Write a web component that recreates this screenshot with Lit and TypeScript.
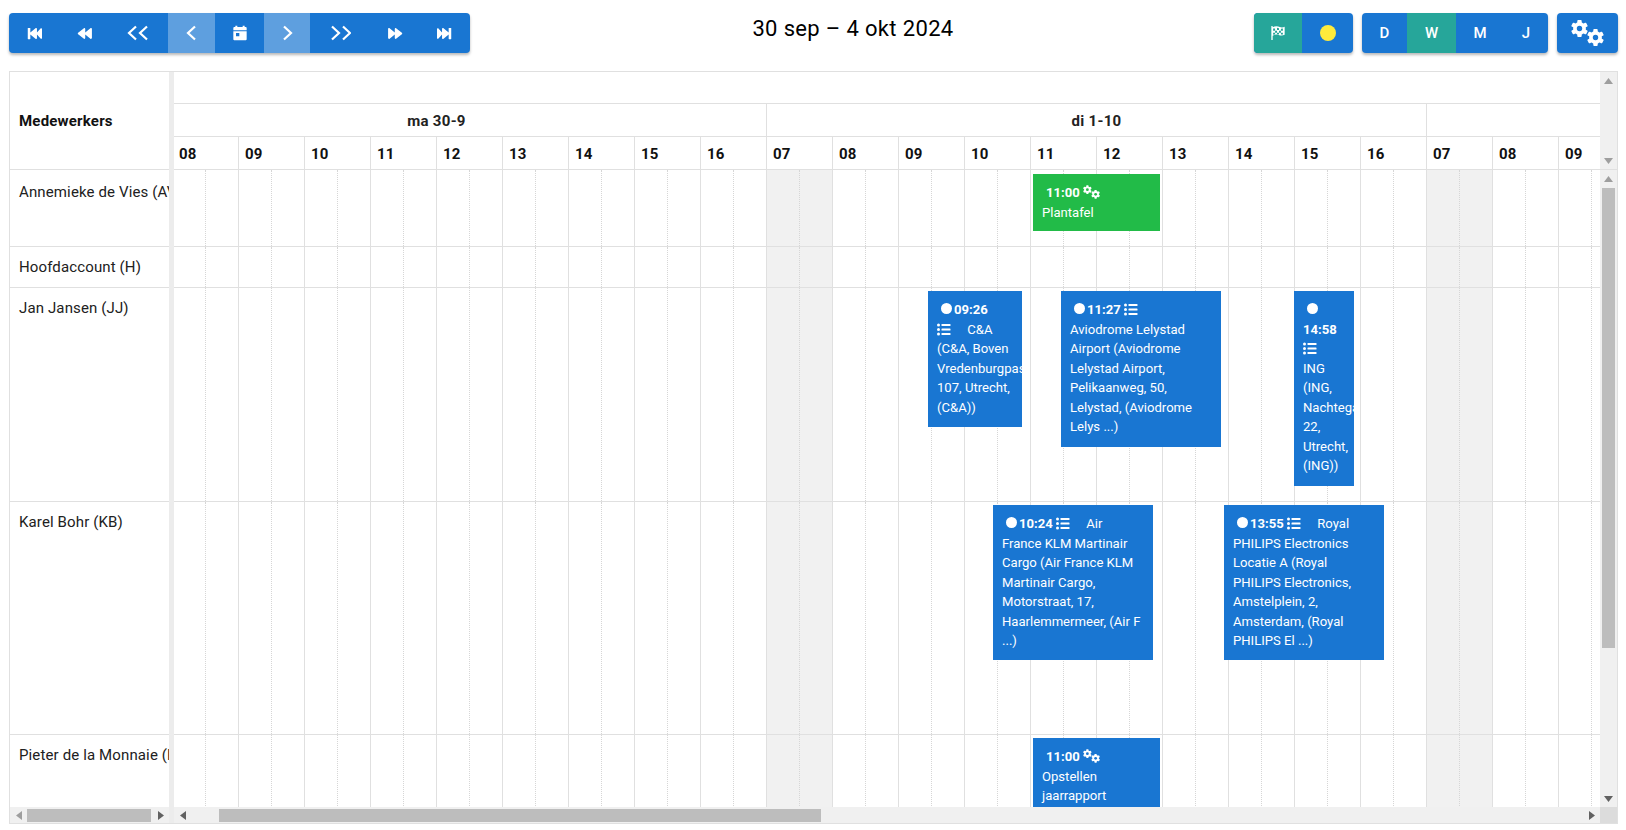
import { LitElement, html, css, svg } from "lit";
import { customElement } from "lit/decorators.js";

const ic = (body: unknown, w: number, h: number, vb = "0 0 512 512") =>
  html`<svg width=${w} height=${h} viewBox=${vb} fill="currentColor">${body}</svg>`;

const skipBack = svg`<path d="M40 64h60c8 0 14 6 14 14v140L300 70c16-12 40-2 40 20v136L470 80c14-14 42-6 42 18v316c0 24-28 32-42 18L340 286v136c0 22-24 32-40 20L114 294v140c0 8-6 14-14 14H40c-8 0-14-6-14-14V78c0-8 6-14 14-14z"/>`;
const back = svg`<path d="M10 256c0-10 5-18 12-24L220 78c18-14 44-2 44 22v124L440 78c18-14 52-2 52 22v312c0 24-34 36-52 22L264 288v124c0 24-26 36-44 22L22 280c-7-6-12-14-12-24z"/>`;
const fwd = svg`<path d="M502 256c0-10-5-18-12-24L292 78c-18-14-44-2-44 22v124L72 78c-18-14-52-2-52 22v312c0 24 34 36 52 22l176-146v124c0 24 26 36 44 22l198-154c7-6 12-14 12-24z"/>`;
const skipFwd = svg`<path d="M472 64h-60c-8 0-14 6-14 14v140L212 70c-16-12-40-2-40 20v136L42 80c-14-14-42-6-42 18v316c0 24 28 32 42 18l130-146v136c0 22 24 32 40 20l186-148v140c0 8 6 14 14 14h60c8 0 14-6 14-14V78c0-8-6-14-14-14z"/>`;
const calendar = svg`<path d="M5 3V1h3v2h8V1h3v2h1.500A1.500 1.500 0 0 1 22 4.500V8H2V4.500A1.500 1.500 0 0 1 3.500 3H5z"/><path fill-rule="evenodd" d="M2 9.500h20V21.500A1.500 1.500 0 0 1 20.500 23h-17A1.500 1.500 0 0 1 2 21.500V9.500zM6 12v5h5v-5H6z"/>`;
const gear = (cx: number, cy: number) => {
  const teeth = [0, 60, 120].map(
    (a) => svg`<rect x=${cx - 2.2} y=${cy - 8.5} width="4.400" height="17" rx=".9" transform="rotate(${a} ${cx} ${cy})"/>`
  );
  const R = 6.4, r = 2.7;
  return svg`<g>${teeth}</g><path fill-rule="evenodd" d="M${cx - R} ${cy}a${R} ${R} 0 1 0 ${2 * R} 0a${R} ${R} 0 1 0 ${-2 * R} 0z"/><circle cx=${cx} cy=${cy} r=${r} fill="var(--gear-hole)"/>`;
};
const gears = svg`${gear(8.5, 8.5)}${gear(24.5, 17.5)}`;
const flag = svg`<path fill-rule="evenodd" d="M1 1h1.500v1.600C5 1.200 8 1.200 10.500 2.200c2 .8 3.600.6 5.500-.2v9c-2.200 1-4 1.200-6 .4-2.700-1-5-.8-7.500.6V17H1V1zm2 3v2.400h2.200V4H3zm4.400-.8v2.400h2.200V3.600L7.400 3.200zm4.400 1v2.400H14V3.900l-2.200.3zM5.200 6.400v2.300h2.200V6.400H5.200zm4.400 0v2.400h2.200V6.500H9.600zM3 8.700V11l2.200-.6V8.700H3zm4.400 0v1.800l2.200.3V8.800H7.400zm4.400.1v2h2.200V8.700l-2.200.1z"/>`;
const list = svg`<circle cx="1.500" cy="2" r="1.500"/><circle cx="1.500" cy="6.500" r="1.500"/><circle cx="1.500" cy="11" r="1.500"/><rect x="4.500" y="1" width="9" height="2" rx=".6"/><rect x="4.500" y="5.500" width="9" height="2" rx=".6"/><rect x="4.500" y="10" width="9" height="2" rx=".6"/>`;

const chevL = (x = 0) => svg`<path d="M${x + 9} 1.500 L${x + 2} 8 L${x + 9} 14.500" fill="none" stroke="currentColor" stroke-width="2.200"/>`;
const chevR = (x = 0) => svg`<path d="M${x + 2} 1.500 L${x + 9} 8 L${x + 2} 14.500" fill="none" stroke="currentColor" stroke-width="2.200"/>`;

const navButtons = [
  { w: 50, tone: "", icon: ic(skipBack, 17, 15) },
  { w: 51, tone: "", icon: ic(back, 16, 15) },
  { w: 58, tone: "", icon: ic(svg`${chevL(0)}${chevL(11)}`, 24, 16, "0 0 24 16") },
  { w: 47, tone: "light", icon: ic(chevL(0), 11, 16, "0 0 11 16") },
  { w: 49, tone: "", icon: ic(calendar, 16, 16, "0 0 24 24") },
  { w: 46, tone: "light", icon: ic(chevR(0), 11, 16, "0 0 11 16") },
  { w: 60, tone: "", icon: ic(svg`${chevR(0)}${chevR(11)}`, 21, 16, "0 0 21 16") },
  { w: 49, tone: "", icon: ic(fwd, 16, 15) },
  { w: 51, tone: "", icon: ic(skipFwd, 17, 15) },
];

type Ev = {
  x: number; y: number; w: number; h: number; green?: boolean;
  time: string; kind: "gears" | "list"; lines: string;
};

const rows: { name: string; h: number; events: Ev[] }[] = [
  { name: "Annemieke de Vies (AV)", h: 77, events: [
    { x: 926, y: 4, w: 127, h: 57, green: true, time: "11:00", kind: "gears", lines: "Plantafel" },
  ] },
  { name: "Hoofdaccount (H)", h: 41, events: [] },
  { name: "Jan Jansen (JJ)", h: 214, events: [
    { x: 821, y: 3, w: 94, h: 136, time: "09:26", kind: "list", lines: "C&A (C&A, Boven Vredenburgpassage 107, Utrecht, (C&A))" },
    { x: 954, y: 3, w: 160, h: 156, time: "11:27", kind: "list", lines: "Aviodrome Lelystad Airport (Aviodrome Lelystad Airport, Pelikaanweg, 50, Lelystad, (Aviodrome Lelys ...)" },
    { x: 1187, y: 3, w: 60, h: 195, time: "14:58", kind: "list", lines: "ING (ING, Nachtegaalstraat 22, Utrecht, (ING))" },
  ] },
  { name: "Karel Bohr (KB)", h: 233, events: [
    { x: 886, y: 3, w: 160, h: 155, time: "10:24", kind: "list", lines: "Air France KLM Martinair Cargo (Air France KLM Martinair Cargo, Motorstraat, 17, Haarlemmermeer, (Air F ...)" },
    { x: 1117, y: 3, w: 160, h: 155, time: "13:55", kind: "list", lines: "Royal PHILIPS Electronics Locatie A (Royal PHILIPS Electronics, Amstelplein, 2, Amsterdam, (Royal PHILIPS El ...)" },
  ] },
  { name: "Pieter de la Monnaie (PM)", h: 160, events: [
    { x: 926, y: 3, w: 127, h: 120, time: "11:00", kind: "gears", lines: "Opstellen jaarrapport" },
  ] },
];

const days = [
  { label: "ma 30-9", hours: [7, 8, 9, 10, 11, 12, 13, 14, 15, 16] },
  { label: "di 1-10", hours: [7, 8, 9, 10, 11, 12, 13, 14, 15, 16] },
  { label: "wo 2-10", hours: [7, 8, 9, 10, 11, 12, 13, 14, 15, 16] },
];

const pad = (n: number) => String(n).padStart(2, "0");

@customElement("app-root")
export class AppRoot extends LitElement {
  static styles = css`
    :host { display: block; width: 1626px; height: 830px; overflow: hidden; background: #fff;
      font-family: Roboto, "Liberation Sans", sans-serif; color: #212121; }
    .top { display: flex; align-items: center; height: 40px; padding: 13px 8px 18px 9px; }
    .group { display: flex; height: 40px; border-radius: 4px; overflow: hidden; background: #1976d2; color: #fff; --gear-hole: #1976d2;
      box-shadow: 0 2px 3px rgba(0,0,0,.28); font-weight: 500; font-size: 15px; }
    .btn { display: flex; align-items: center; justify-content: center; height: 100%; }
    .light { background: #5e9fdf; }
    .teal { background: #26a69a; }
    .title { flex: 1; text-align: center; font-size: 22px; font-weight: 400; letter-spacing: .35px; padding: 0 18px 10px 0; color: #000; }
    .right { display: flex; gap: 9px; }
    .sun { width: 16px; height: 16px; border-radius: 50%; background: #ffeb3b; }

    .table { display: flex; margin-left: 9px; width: 1609px; height: 753px; border: 1px solid #e0e0e0; box-sizing: border-box; }
    .left { width: 159px; flex: none; display: flex; flex-direction: column; overflow: hidden; }
    .split { width: 5px; flex: none; background: #ececec; }
    .lhead { height: 98px; flex: none; display: flex; align-items: center; padding: 0 0 0 9px; box-sizing: border-box; font-weight: 700; font-size: 15px; letter-spacing: .2px; color: #111; border-bottom: 1px solid #e0e0e0; }
    .lbody { flex: 1; min-height: 0; overflow: hidden; }
    .lrow { box-sizing: border-box; border-bottom: 1px solid #e0e0e0; padding: 10px 0 0 9px; font-size: 15px; letter-spacing: .13px; line-height: 20px; white-space: nowrap; overflow: hidden; }
    .lrow:first-child { padding-top: 12px; }

    .hbar { height: 16px; flex: none; background: #f0f0f0; display: flex; align-items: flex-start; }
    .arrow { width: 17px; height: 17px; flex: none; display: flex; align-items: center; justify-content: center; color: #757575; }
    .thumb { background: #bdbdbd; height: 13px; margin-top: 2px; }
    .spacer { flex: 1; }
    .corner { width: 17px; height: 16px; flex: none; background: #dcdcdc; }

    .main { flex: 1; min-width: 0; display: flex; flex-direction: column; }
    .upper { flex: none; display: flex; height: 98px; }
    .lower { flex: 1; min-height: 0; display: flex; }
    .clip { width: 1426px; flex: none; overflow: hidden; }
    .vbar { width: 17px; flex: none; box-sizing: border-box; background: #f0f0f0; display: flex; flex-direction: column; align-items: flex-start; }
    .upper .vbar { border-bottom: 1px solid #e0e0e0; }
    .vbar .arrow { width: 17px; }
    .lower .arrow:first-child { height: 18px; }
    .vthumb { width: 13px; margin-left: 2px; background: #bdbdbd; flex: none; }
    .track { margin-left: -67px; width: 1980px; }

    .hrow { display: flex; box-sizing: border-box; border-bottom: 1px solid #e0e0e0; }
    .h0 { height: 32px; }
    .h1 { height: 33px; }
    .h2 { height: 33px; }
    .day { flex: none; width: 660px; box-sizing: border-box; border-right: 1px solid #e0e0e0; text-align: center; font-weight: 700; font-size: 15px; letter-spacing: .3px; line-height: 34px; color: #222; }
    .hour { flex: none; width: 66px; box-sizing: border-box; border-right: 1px solid #e0e0e0; padding-left: 6px; font-weight: 700; font-size: 15px; letter-spacing: .2px; line-height: 34px; color: #111; }

    .grow { position: relative; box-sizing: border-box; border-bottom: 1px solid #e0e0e0; display: flex; }
    .cell { flex: none; width: 66px; box-sizing: border-box; border-right: 1px solid #e0e0e0; position: relative; }
    .cell::before { content: ""; position: absolute; left: 32px; top: 0; bottom: 0; border-left: 1px dotted #d6d6d6; }
    .off { background: #f1f1f1; }

    .ev { position: absolute; box-sizing: border-box; background: #1976d2; --gear-hole: #1976d2; color: #fff; font-size: 13.100px; line-height: 19.500px; padding: 9px 9px 0 9px; overflow: hidden; }
    .ev.green { background: #22bb48; --gear-hole: #22bb48; }
    .ev b { font-weight: 700; }
    .dot { display: inline-block; width: 11px; height: 11px; border-radius: 50%; background: #fff; margin: 0 2px 0 4px; vertical-align: 0; }
    .indent { display: inline-block; width: 4px; }
    .ev svg { vertical-align: -2px; }
    .licon { display: inline-block; padding-right: 13px; }
  `;

  private renderEvent(e: Ev) {
    const pos = `left:${e.x}px;top:${e.y}px;width:${e.w}px;height:${e.h}px`;
    const cls = `ev ${e.green ? "green" : ""}`;
    if (e.kind === "gears") {
      return html`<div class=${cls} style=${pos}><span class="indent"></span><b>${e.time}</b> ${ic(gears, 17, 14, "0 0 33 26")}<div>${e.lines}</div></div>`;
    }
    return html`<div class=${cls} style=${pos}><span class="dot"></span><b>${e.time}</b> <span class="licon">${ic(list, 14, 13, "0 0 14 13")}</span> ${e.lines}</div>`;
  }

  render() {
    const hours = days.flatMap((d) => d.hours);
    return html`
      <div class="top">
        <div class="group">
          ${navButtons.map((b) => html`<div class="btn ${b.tone}" style="width:${b.w}px">${b.icon}</div>`)}
        </div>
        <div class="title">30 sep – 4 okt 2024</div>
        <div class="right">
          <div class="group">
            <div class="btn teal" style="width:48px">${ic(flag, 16, 16, "0 0 17 18")}</div>
            <div class="btn" style="width:51px"><span class="sun"></span></div>
          </div>
          <div class="group">
            <div class="btn" style="width:45px">D</div>
            <div class="btn teal" style="width:49px">W</div>
            <div class="btn" style="width:48px">M</div>
            <div class="btn" style="width:44px">J</div>
          </div>
          <div class="group">
            <div class="btn" style="width:61px">${ic(gears, 33, 26, "0 0 33 26")}</div>
          </div>
        </div>
      </div>
      <div class="table">
        <div class="left">
          <div class="lhead">Medewerkers</div>
          <div class="lbody">
            ${rows.map((r) => html`<div class="lrow" style="height:${r.h}px">${r.name}</div>`)}
          </div>
          <div class="hbar">
            <span class="arrow"><svg width="6" height="9" viewBox="0 0 6 9" fill="#9e9e9e"><path d="M6 0v9L0 4.500z"/></svg></span>
            <span class="thumb" style="width:124px"></span>
            <span class="spacer"></span>
            <span class="arrow"><svg width="6" height="9" viewBox="0 0 6 9" fill="#616161"><path d="M0 0v9l6-4.500z"/></svg></span>
          </div>
        </div>
        <div class="split"></div>
        <div class="main">
          <div class="upper">
            <div class="clip">
              <div class="track">
                <div class="hrow h0"></div>
                <div class="hrow h1">${days.map((d) => html`<div class="day">${d.label}</div>`)}</div>
                <div class="hrow h2">${hours.map((h) => html`<div class="hour">${pad(h)}</div>`)}</div>
              </div>
            </div>
            <div class="vbar">
              <span class="arrow"><svg width="9" height="6" viewBox="0 0 9 6" fill="#9e9e9e"><path d="M0 6h9L4.500 0z"/></svg></span>
              <span class="spacer"></span>
              <span class="arrow"><svg width="9" height="6" viewBox="0 0 9 6" fill="#9e9e9e"><path d="M0 0h9L4.500 6z"/></svg></span>
            </div>
          </div>
          <div class="lower">
            <div class="clip">
              <div class="track">
                ${rows.map((r) => html`
                  <div class="grow" style="height:${r.h}px">
                    ${hours.map((_, i) => html`<div class="cell ${i % 10 === 0 ? "off" : ""}"></div>`)}
                    ${r.events.map((e) => this.renderEvent(e))}
                  </div>`)}
              </div>
            </div>
            <div class="vbar">
              <span class="arrow"><svg width="9" height="6" viewBox="0 0 9 6" fill="#9e9e9e"><path d="M0 6h9L4.500 0z"/></svg></span>
              <span class="vthumb" style="height:460px"></span>
              <span class="spacer"></span>
              <span class="arrow"><svg width="9" height="6" viewBox="0 0 9 6" fill="#616161"><path d="M0 0h9L4.500 6z"/></svg></span>
            </div>
          </div>
          <div class="hbar">
            <span class="arrow"><svg width="6" height="9" viewBox="0 0 6 9" fill="#616161"><path d="M6 0v9L0 4.500z"/></svg></span>
            <span style="width:28px"></span>
            <span class="thumb" style="width:602px"></span>
            <span class="spacer"></span>
            <span class="arrow"><svg width="6" height="9" viewBox="0 0 6 9" fill="#616161"><path d="M0 0v9l6-4.500z"/></svg></span>
            <span class="corner"></span>
          </div>
        </div>
      </div>
    `;
  }
}
